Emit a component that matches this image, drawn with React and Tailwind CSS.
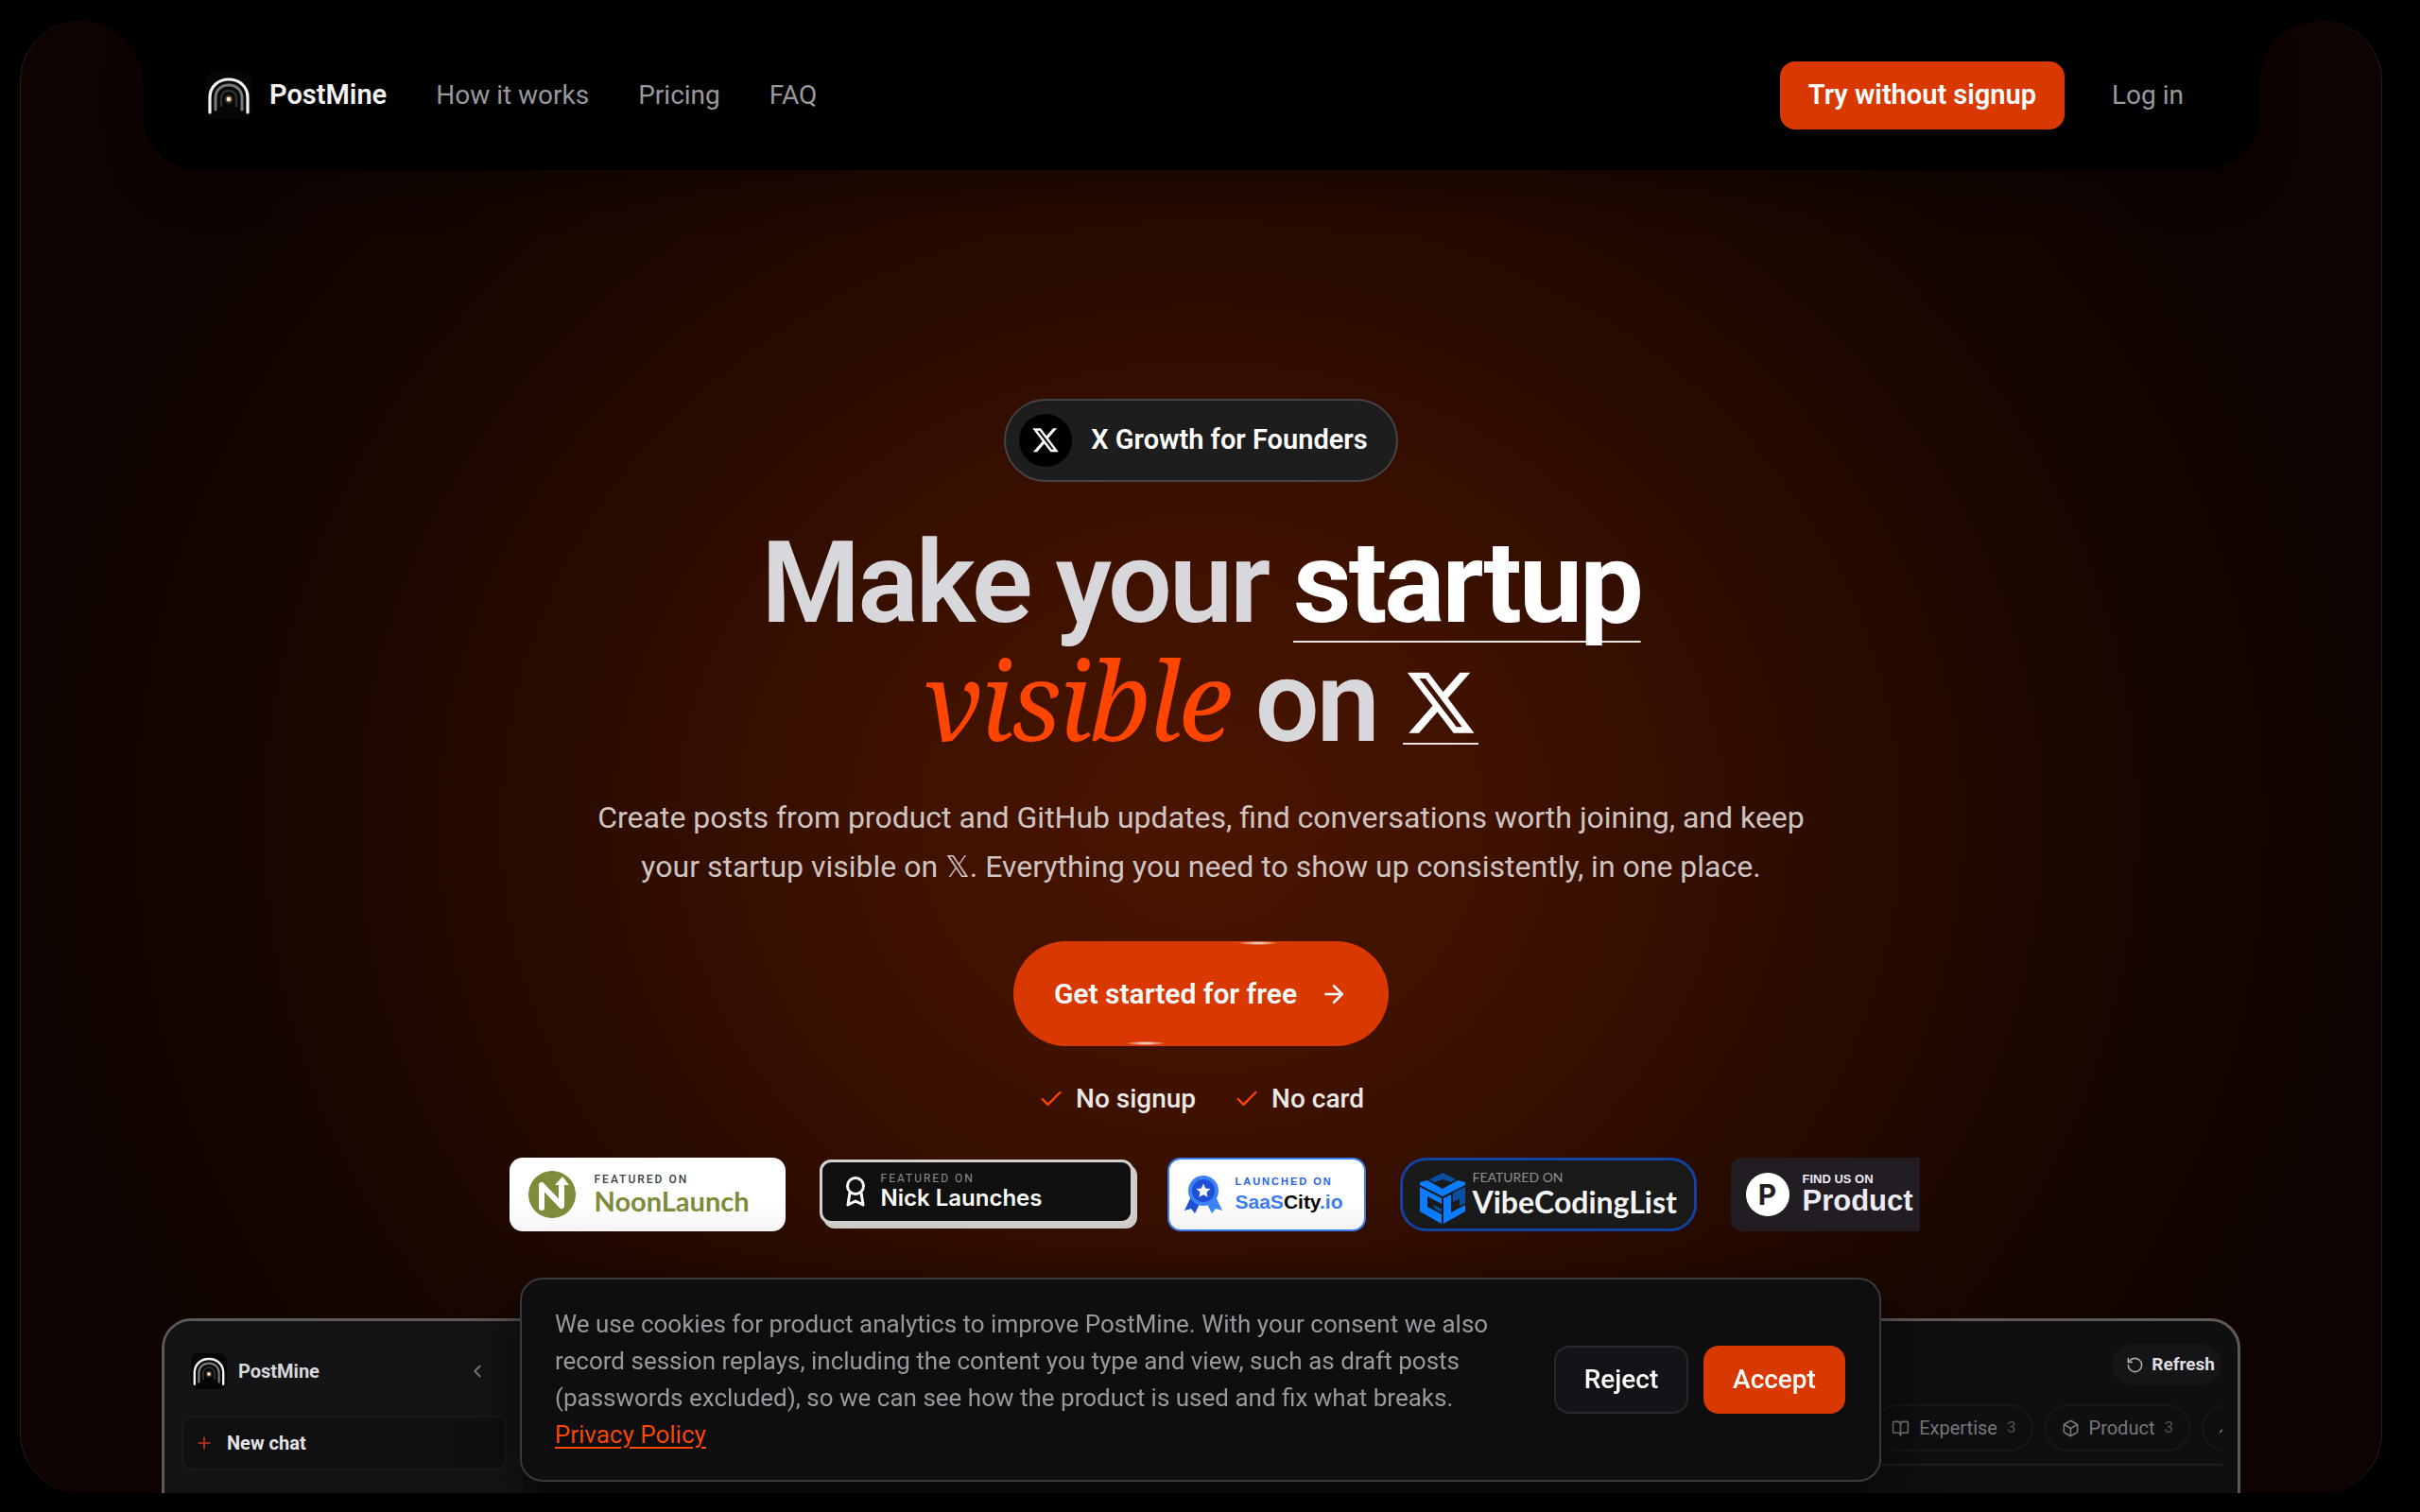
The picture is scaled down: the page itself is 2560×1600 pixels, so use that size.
import { ArrowRight, BookOpen, Box, Check, ChevronLeft, Plus, RotateCcw, TrendingUp } from "lucide-react";

const navLinks = ["How it works", "Pricing", "FAQ"];
const perks = ["No signup", "No card"];

function LogoMark({ className }) {
  return (
    <svg viewBox="0 0 50 50" fill="none" className={className} aria-hidden="true">
      <rect width="50" height="50" rx="10" fill="#050707" />
      <path d="M5 43V27C5 16 13.500 8 25 8S45 16 45 27V43" stroke="#f4f4f4" strokeWidth="3.200" strokeLinecap="round" />
      <path d="M11 40V27.500C11 19.500 17 14 25 14S39 19.500 39 27.500V40" stroke="#77787a" strokeWidth="3" strokeLinecap="round" />
      <path d="M17 36V28C17 23 20.500 20 25 20S33 23 33 28V36" stroke="#303030" strokeWidth="2.500" strokeLinecap="round" />
      <circle cx="25" cy="29" r="4.500" fill="#8a5a34" opacity="0.5" />
      <circle cx="25" cy="29" r="2.400" fill="#ffe9d2" />
    </svg>
  );
}

function XLogo({ className }) {
  return (
    <svg viewBox="1 2 22 20" fill="currentColor" className={className} aria-hidden="true">
      <path d="M18.244 2.250h3.308l-7.227 8.260 8.502 11.240H16.170l-5.214-6.817L4.990 21.750H1.680l7.730-8.835L1.254 2.250H8.080l4.713 6.231zm-1.161 17.520h1.833L7.084 4.126H5.117z" />
    </svg>
  );
}

function Header() {
  return (
    <header className="relative mx-[129px] h-[158px] shrink-0 rounded-b-[60px] bg-black shadow-[0_24px_40px_rgba(0,0,0,0.25)]">
      {/* Concave corners next to the notch */}
      <div className="absolute top-0 -left-16 size-16 bg-[radial-gradient(circle_at_bottom_left,transparent_63px,#000_64px)]" />
      <div className="absolute top-0 -right-16 size-16 bg-[radial-gradient(circle_at_bottom_right,transparent_63px,#000_64px)]" />

      <div className="flex h-full items-center pr-20 pl-[66px]">
        <a href="#" className="flex items-center gap-[18px] text-[29px] font-semibold text-zinc-100">
          <LogoMark className="size-[50px]" />
          PostMine
        </a>
        <nav className="ml-[52px] flex gap-[52px] text-[28px] text-[#98989d]">
          {navLinks.map((link) => (
            <a key={link} href="#">{link}</a>
          ))}
        </nav>
        <a href="#" className="ml-auto flex h-[72px] items-center rounded-2xl bg-[#d93900] px-[30px] text-[29px] font-semibold text-white">
          Try without signup
        </a>
        <a href="#" className="ml-[50px] text-[28px] text-[#98989d]">Log in</a>
      </div>
    </header>
  );
}

function Hero() {
  return (
    <section className="flex shrink-0 flex-col items-center pt-[242px] text-center">
      <div className="flex h-[88px] items-center gap-5 rounded-full border-2 border-[#444] bg-[#1d1d1d] pr-[30px] pl-3.5 text-[29px] font-semibold text-white">
        <span className="flex size-14 items-center justify-center rounded-full bg-black">
          <XLogo className="w-7" />
        </span>
        X Growth for Founders
      </div>

      <h1 className="mt-11 text-[120px] leading-[126px] font-semibold tracking-tight text-[#d7d7dc]">
        Make your{" "}
        <span className="font-bold text-white underline decoration-[#e9e4e0] decoration-2 underline-offset-[20px] [text-decoration-skip-ink:none]">
          startup
        </span>
        <br />
        <span className="font-['Noto_Serif','Liberation_Serif',serif] text-[116px] leading-none font-normal text-[#ff4500] italic">visible</span>{" "}
        on{" "}
        <span className="-mb-1 inline-block border-b-2 border-[#e9e4e0] px-1 pb-2.5 text-white">
          <XLogo className="w-[72px]" />
        </span>
      </h1>

      <p className="mt-[33px] max-w-[1320px] text-[32px] leading-[52px] text-[#cfc4c0]">
        Create posts from product and GitHub updates, find conversations worth joining, and keep your startup visible on{" "}
        <span className="font-['DejaVu_Sans',sans-serif] leading-none">𝕏</span>. Everything you need to show up consistently, in one place.
      </p>

      <button type="button" className="relative mt-[53px] flex h-[111px] items-center gap-6 rounded-full bg-[#d93900] px-[43px] text-[30px] font-semibold text-white">
        <span className="absolute top-0 right-[116px] h-1 w-11 bg-[radial-gradient(closest-side,#fff,transparent)]" />
        <span className="absolute bottom-px left-[118px] h-1 w-11 bg-[radial-gradient(closest-side,#fff,transparent)]" />
        Get started for free
        <ArrowRight className="size-[30px]" strokeWidth={2} />
      </button>

      <ul className="mt-9 flex gap-10 text-[28px] leading-10 font-medium text-[#ece8e6]">
        {perks.map((perk) => (
          <li key={perk} className="flex items-center gap-3">
            <Check className="size-7 text-[#ff4500]" strokeWidth={2} />
            {perk}
          </li>
        ))}
      </ul>
    </section>
  );
}

function Badges() {
  return (
    <div className="mx-auto mt-[42px] flex w-full max-w-[1520px] shrink-0 gap-9 overflow-hidden pl-7 whitespace-nowrap">
      <a href="#" className="flex h-[78px] w-[292px] shrink-0 items-center gap-5 rounded-[14px] bg-[linear-gradient(#fff_60%,#f5f5f5)] pl-5">
        <svg viewBox="0 0 50 50" className="size-[50px]" aria-hidden="true">
          <circle cx="25" cy="25" r="25" fill="#7d8b3a" />
          <path d="M14 39V15L35 37V13" fill="none" stroke="#fff" strokeWidth="6" strokeLinecap="round" strokeLinejoin="round" />
          <path d="M28 15L36 6L43 15Z" fill="#fff" />
        </svg>
        <span>
          <span className="block text-[12px] leading-[14px] font-medium tracking-[2px] text-[#3f3f46]">FEATURED ON</span>
          <span className="block font-['Lato',sans-serif] text-[29px] leading-8 font-bold text-[#7d8b3a]">NoonLaunch</span>
        </span>
      </a>

      <a href="#" className="mt-0.5 flex h-[68px] w-[332px] shrink-0 items-center gap-4 rounded-xl border-[3px] border-[#d4d0cd] bg-[#101010] pl-6 shadow-[4px_5px_0_#cfcbc8]">
        <svg viewBox="0 0 22 32" fill="none" stroke="#fff" strokeWidth="3" className="h-8" aria-hidden="true">
          <circle cx="11" cy="10" r="8.500" />
          <path d="M5 17L3 30L11 26L19 30L17 17" strokeLinejoin="round" />
        </svg>
        <span>
          <span className="block text-[12px] leading-[14px] tracking-[2px] text-[#8f8f8f]">FEATURED ON</span>
          <span className="block font-['Inter',sans-serif] text-[24px] leading-7 font-semibold text-white">Nick Launches</span>
        </span>
      </a>

      <a href="#" className="flex h-[78px] w-[210px] shrink-0 items-center gap-3.5 rounded-[14px] border-2 border-[#3b7cf0] bg-[linear-gradient(#fff_60%,#f3f3f3)] pl-4">
        <svg viewBox="0 0 40 40" className="size-10" aria-hidden="true">
          <path d="M8 20L0 37L7 35L11 40L18 26Z" fill="#1d4fd7" />
          <path d="M32 20L40 37L33 35L29 40L22 26Z" fill="#3b82f6" />
          <circle cx="20" cy="16" r="16" fill="#3b82f6" />
          <circle cx="20" cy="16" r="12" fill="#1d4fd7" />
          <path d="M20 8.500l2.200 4.900 5.300.6-4 3.600 1.100 5.200-4.600-2.600-4.600 2.600 1.100-5.200-4-3.600 5.300-.6z" fill="#fff" />
        </svg>
        <span className="font-['Liberation_Sans',sans-serif]">
          <span className="block text-[11px] leading-4 font-bold tracking-[2px] text-[#2563eb]">LAUNCHED ON</span>
          <span className="block text-[21px] leading-7 font-bold text-black">
            <span className="text-[#3b7cf0]">SaaS</span>City<span className="text-[#3b7cf0]">.io</span>
          </span>
        </span>
      </a>

      <a href="#" className="flex h-[78px] w-[314px] shrink-0 items-center gap-2 rounded-[28px] border-[3px] border-[#1442a0] bg-[#1a1a1a] pl-[18px]">
        <svg viewBox="0 0 48 54" className="h-[54px] translate-y-1" aria-hidden="true">
          <path d="M24 0L38 7L33 10L24 7L15 10L10 7Z" fill="#07509f" />
          <path d="M0 10L8 8L24 17L40 8L48 10V13L24 25L0 13Z" fill="#0a7cff" />
          <path d="M0 15L23 27V33L8 25V36L23 44V54L0 41Z" fill="#0a7cff" />
          <path d="M14 34L23 38V42L16 38Z" fill="#07509f" />
          <path d="M25 27L33 23V42L48 34V41L25 54Z" fill="#0a7cff" />
          <path d="M35 21L48 15V32L42 35V28L35 31Z" fill="#07509f" />
        </svg>
        <span>
          <span className="block font-['Lato',sans-serif] text-[14px] leading-4 text-[#8f8f8f]">FEATURED ON</span>
          <span className="block font-['Lato',sans-serif] text-[32px] leading-9 font-bold text-zinc-100">VibeCodingList</span>
        </span>
      </a>

      <a href="#" className="flex h-[78px] w-[204px] shrink-0 items-center gap-3.5 rounded-l-xl bg-[#221d22] pl-4">
        <span className="flex size-[46px] shrink-0 items-center justify-center rounded-full bg-white font-['Inter',sans-serif] text-[30px] font-bold text-[#221d22]">P</span>
        <span className="font-['Liberation_Sans',sans-serif] font-bold text-[#eeeaf6]">
          <span className="block text-[13px] leading-[14px]">FIND US ON</span>
          <span className="block text-[31px] leading-8">Product</span>
        </span>
      </a>
    </div>
  );
}

function Tab({ icon: Icon, label, count }) {
  return (
    <button type="button" className="flex h-[50px] shrink-0 items-center gap-2.5 rounded-full border-2 border-[#18181a] px-4 text-[20px] text-[#77777b]">
      <Icon className="size-[19px]" />
      {label}
      <span className="text-[17px] text-[#505054]">{count}</span>
    </button>
  );
}

function AppPreview() {
  return (
    <div className="mx-[149px] mt-[92px] flex min-h-[300px] flex-1 rounded-t-[32px] border-[3px] border-[#5d5a59] bg-[#0f0f11] pr-4">
      <aside className="w-[380px] shrink-0 rounded-tl-[28px] bg-[#141416] px-[18px] pt-[34px]">
        <div className="flex items-center gap-3 pl-2.5 text-[20px] font-bold text-[#d8d8da]">
          <LogoMark className="size-[38px]" />
          PostMine
          <ChevronLeft className="mr-5 ml-auto size-[22px] text-[#77777b]" />
        </div>
        <button type="button" className="mt-[28px] flex h-[58px] w-full items-center gap-3.5 rounded-xl border-2 border-[#1a1a1c] bg-[#101012] pl-3 text-[20px] font-bold text-[#e4e4e6]">
          <Plus className="size-5 text-[#c23620]" />
          New chat
        </button>
      </aside>

      <div className="flex min-w-0 flex-1 flex-col">
        <div className="flex justify-end pt-6">
          <button type="button" className="flex h-11 items-center gap-2 rounded-full bg-[#151517] px-2 pl-4 text-[19px] font-bold text-[#dedee0]">
            <RotateCcw className="size-[19px] text-[#a8a8ab]" />
            Refresh
          </button>
        </div>
        <div className="mt-5 flex justify-end overflow-hidden border-b-2 border-[#1e1e20] pb-[13px]">
          <div className="-mr-[30px] flex gap-3">
            <Tab icon={BookOpen} label="Expertise" count={3} />
            <Tab icon={Box} label="Product" count={3} />
            <div className="flex h-[50px] w-[52px] items-center rounded-l-full border-2 border-r-0 border-[#18181a] pl-4 text-[#77777b]">
              <TrendingUp className="size-[19px] shrink-0" />
            </div>
          </div>
        </div>
      </div>
    </div>
  );
}

function CookieBanner() {
  return (
    <div className="fixed right-5 bottom-8 left-0 mx-auto flex max-w-[1440px] items-center justify-between rounded-3xl border-2 border-[#38393b] bg-[#0e0e10] pr-9 pl-[35px] py-7 shadow-[0_16px_60px_rgba(0,0,0,0.6)]">
      <p className="w-[1000px] text-[26px] leading-[39px] text-[#98989d]">
        We use cookies for product analytics to improve PostMine. With your consent we also record session replays, including the content you type and view, such as draft posts (passwords excluded), so we can see how the product is used and fix what breaks.{" "}
        <a href="#" className="text-[#ff4500] underline underline-offset-4">Privacy Policy</a>
      </p>
      <div className="flex gap-4 text-[28px] font-medium text-white">
        <button type="button" className="h-[72px] w-[142px] rounded-2xl border-2 border-[#29292c] bg-[#141418]">Reject</button>
        <button type="button" className="h-[72px] w-[150px] rounded-2xl bg-[#d93900]">Accept</button>
      </div>
    </div>
  );
}

export default function App() {
  return (
    <div className="flex h-screen flex-col bg-black pt-[22px] pr-10 pb-5 pl-[21px] font-['Roboto',sans-serif]">
      <main className="flex min-h-0 flex-1 flex-col overflow-hidden rounded-[64px] border-x border-[#222] bg-[radial-gradient(ellipse_1270px_1120px_at_50%_850px,#4a1500_0%,#3e1100_27%,#290b00_55%,#160600_80%,#0e0300_100%)]">
        <Header />
        <Hero />
        <Badges />
        <AppPreview />
      </main>
      <CookieBanner />
    </div>
  );
}
